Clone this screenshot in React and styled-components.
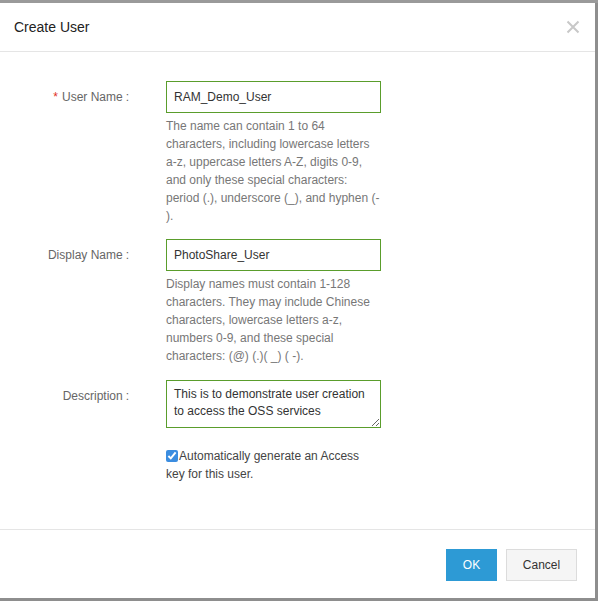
import styled, { createGlobalStyle } from "styled-components";

const GlobalStyle = createGlobalStyle`
  html, body {
    margin: 0;
    padding: 0;
    background: #8c8c8c;
    font-family: "Liberation Sans", Arial, sans-serif;
  }
`;

const Backdrop = styled.div`
  width: 598px;
  height: 601px;
  overflow: hidden;
  background: linear-gradient(#9a9a9a, #9a9a9a) top / 100% 3px no-repeat, #8e8e8e;
  padding-top: 3px;
  box-sizing: border-box;
`;

const Modal = styled.div`
  width: 595px;
  height: 595px;
  background: #fff;
  display: flex;
  flex-direction: column;
`;

const Header = styled.div`
  height: 48px;
  border-bottom: 1px solid #e5e5e5;
  display: flex;
  align-items: center;
  justify-content: space-between;
  padding: 0 15px 0 14px;
`;

const Title = styled.h2`
  margin: 0;
  font-size: 14px;
  font-weight: 500;
  color: #222;
`;

const Close = styled.button`
  border: 0;
  background: none;
  padding: 0;
  width: 14px;
  height: 14px;
  cursor: pointer;
  display: flex;
`;

const Body = styled.div`
  flex: 1;
  padding-top: 29px;
  display: grid;
  grid-template-columns: 129px 215px;
  column-gap: 37px;
  align-content: start;
`;

const Label = styled.div`
  height: 32px;
  display: flex;
  align-items: center;
  justify-content: flex-end;
  font-size: 12px;
  color: #666;
  white-space: nowrap;
`;

const Required = styled.span`
  color: #e0301e;
  margin-right: 4px;
`;

const Colon = styled.span`
  margin-left: 3px;
`;

const Field = styled.div`
  margin-bottom: ${(p) => p.$gap ?? 15}px;
`;

const Input = styled.input`
  box-sizing: border-box;
  width: 215px;
  height: 32px;
  border: 1px solid #5a9d2c;
  padding: 0 7px;
  font-family: inherit;
  font-size: 12px;
  color: #333;
  outline: none;
`;

const TextArea = styled.textarea`
  box-sizing: border-box;
  display: block;
  width: 215px;
  height: 48px;
  border: 1px solid #5a9d2c;
  padding: 5px 7px;
  font-family: inherit;
  font-size: 12px;
  line-height: 17px;
  color: #333;
  outline: none;
  resize: vertical;
`;

const Help = styled.p`
  margin: 4px 0 0;
  font-size: 12px;
  line-height: 18px;
  color: #777;
`;

const CheckRow = styled.label`
  display: block;
  font-size: 12px;
  line-height: 18px;
  color: #444;
  margin-top: 19px;
`;

const Check = styled.input`
  margin: 0 1px 0 0;
  width: 12px;
  height: 12px;
  vertical-align: -2px;
  accent-color: #3b8de0;
`;

const Footer = styled.div`
  height: 69px;
  border-top: 1px solid #e5e5e5;
  display: flex;
  justify-content: flex-end;
  align-items: flex-start;
  gap: 9px;
  padding: 19px 18px 0 0;
  box-sizing: border-box;
`;

const Button = styled.button`
  height: 32px;
  min-width: ${(p) => (p.$primary ? 51 : 71)}px;
  padding: 0 12px;
  font-family: inherit;
  font-size: 12px;
  cursor: pointer;
  border: 1px solid ${(p) => (p.$primary ? "#2d9ad5" : "#dcdcdc")};
  background: ${(p) => (p.$primary ? "#2d9ad5" : "#f5f5f5")};
  color: ${(p) => (p.$primary ? "#fff" : "#333")};
`;

export default function App() {
  return (
    <Backdrop>
      <GlobalStyle />
      <Modal>
        <Header>
          <Title>Create User</Title>
          <Close aria-label="Close">
            <svg width="14" height="14" viewBox="0 0 14 14">
              <path d="M1.5 1.5L12.5 12.5M12.5 1.5L1.5 12.5" stroke="#c8c8c8" strokeWidth="2" />
            </svg>
          </Close>
        </Header>
        <Body>
          <Label>
            <Required>*</Required>User Name<Colon>:</Colon>
          </Label>
          <Field $gap={14}>
            <Input defaultValue="RAM_Demo_User" />
            <Help>
              The name can contain 1 to 64 characters, including lowercase letters
              a-z, uppercase letters A-Z, digits 0-9, and only these special
              characters: period (.), underscore (_), and hyphen (-<wbr />).
            </Help>
          </Field>

          <Label>
            Display Name<Colon>:</Colon>
          </Label>
          <Field $gap={15}>
            <Input defaultValue="PhotoShare_User" />
            <Help>
              Display names must contain 1-128 characters. They may include Chinese
              characters, lowercase letters a-z, numbers 0-9, and these special
              characters: (@) (.)( _) ( -).
            </Help>
          </Field>

          <Label>
            Description<Colon>:</Colon>
          </Label>
          <Field $gap={0}>
            <TextArea defaultValue="This is to demonstrate user creation to access the OSS services" />
            <CheckRow>
              <Check type="checkbox" defaultChecked />
              Automatically generate an Access key for this user.
            </CheckRow>
          </Field>
        </Body>
        <Footer>
          <Button $primary>OK</Button>
          <Button>Cancel</Button>
        </Footer>
      </Modal>
    </Backdrop>
  );
}
